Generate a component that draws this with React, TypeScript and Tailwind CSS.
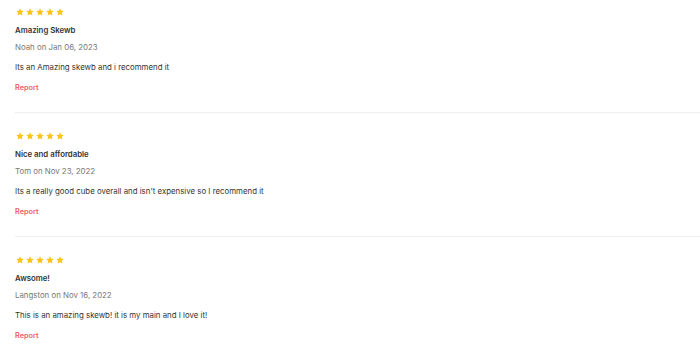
const reviews = [
	{
		title: "Amazing Skewb",
		author: "Noah",
		date: "Jan 06, 2023",
		body: "Its an Amazing skewb and i recommend it",
	},
	{
		title: "Nice and affordable",
		author: "Tom",
		date: "Nov 23, 2022",
		body: "Its a really good cube overall and isn't expensive so I recommend it",
	},
	{
		title: "Awsome!",
		author: "Langston",
		date: "Nov 16, 2022",
		body: "This is an amazing skewb! it is my main and I love it!",
	},
];

const Star = () => (
	<svg viewBox="0 0 24 24" className="size-[8px]" fill="#fcc419">
		<path d="M12 0.8l3.4 7.4 8.1.9-6 5.5 1.7 8-7.2-4.1-7.2 4.1 1.7-8-6-5.5 8.1-.9z" />
	</svg>
);

export default function App() {
	return (
		<div className="w-[700px] bg-white pl-[15px] font-['Inter',sans-serif]">
			{reviews.map((review, i) => (
				<div
					key={review.title}
					className={`flex flex-col border-b border-[#eeeeee] ${i === 0 ? "pt-[8px]" : "pt-[19px]"} pb-[16px]`}
				>
					<div className="flex gap-[2px] pl-[1px]">
						<Star />
						<Star />
						<Star />
						<Star />
						<Star />
					</div>
					<h3 className="mt-[6px] text-[7.8px] font-semibold leading-[16px] text-[#333333]">
						{review.title}
					</h3>
					<p className="mt-px text-[7.85px] leading-[16px] text-[#777777]">
						{review.author} on {review.date}
					</p>
					<p className="mt-[4px] text-[7.85px] leading-[16px] text-[#333333]">
						{review.body}
					</p>
					<a className="mt-[5px] text-[7.3px] font-semibold leading-[16px] text-[#f25d5d]">
						Report
					</a>
				</div>
			))}
		</div>
	);
}
